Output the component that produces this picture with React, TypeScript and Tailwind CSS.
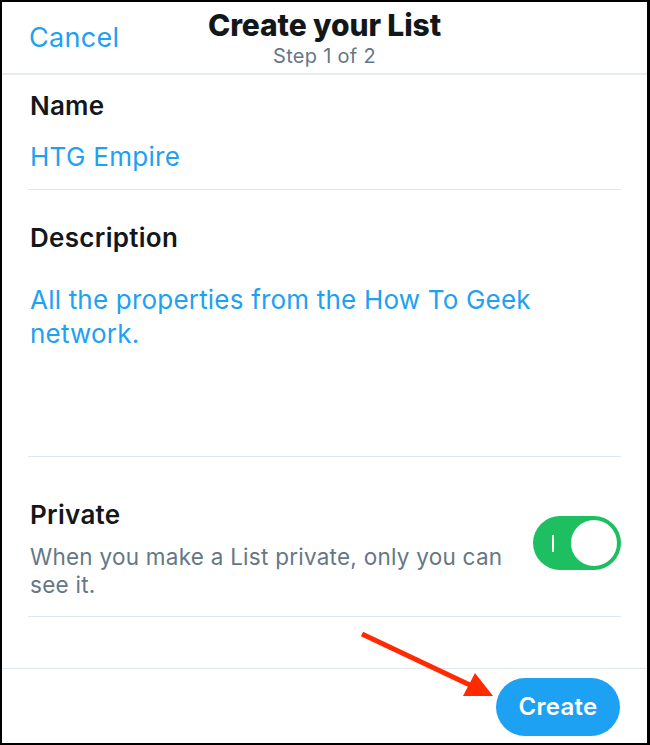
import React from "react";

function Toggle() {
  return (
    <div className="relative w-[88px] h-[54px] rounded-full bg-[#1dbf60] flex items-center shrink-0">
      <div className="w-[2px] h-[17px] bg-white ml-[19px]" />
      <div className="absolute right-[2px] top-[2px] w-[50px] h-[50px] rounded-full bg-white border-2 border-[#1dbf60]" />
    </div>
  );
}

export default function App() {
  return (
    <div
      className="relative w-[650px] h-[745px] bg-white border-l-2 border-t-2 border-r-[3px] border-b-2 border-black flex flex-col overflow-hidden"
      style={{ fontFamily: "Inter, 'Noto Sans', sans-serif" }}
    >
      {/* Header */}
      <div className="relative h-[73px] shrink-0 border-b-2 border-[#e6ecf0] flex items-start">
        <div className="absolute left-[27px] top-[20px] text-[27px] leading-[32px] text-[#1da1f2] tracking-[0.3px]">
          Cancel
        </div>
        <div className="w-full flex flex-col items-center pt-[6px]">
          <div className="text-[30px] leading-[34px] font-extrabold text-[#14171a] tracking-[-0.1px]">
            Create your List
          </div>
          <div className="text-[20px] leading-[24px] text-[#657786] mt-[2px] tracking-[0.3px]">
            Step 1 of 2
          </div>
        </div>
      </div>

      {/* Body */}
      <div className="flex flex-col px-[26px] flex-1">
        {/* Name */}
        <div className="pt-[16px] pb-[17px] border-b border-[#e1e8ed] px-[2px]">
          <div className="text-[26px] leading-[30px] font-semibold text-[#14171a] tracking-[0.2px]">Name</div>
          <div className="text-[26px] leading-[30px] text-[#1da1f2] mt-[21px] tracking-[0.3px]">HTG Empire</div>
        </div>

        {/* Description */}
        <div className="h-[267px] pt-[33px] border-b border-[#e1e8ed] px-[2px]">
          <div className="text-[26px] leading-[30px] font-semibold text-[#14171a] tracking-[0.3px]">Description</div>
          <div className="text-[26px] leading-[34px] text-[#1da1f2] mt-[30px] w-[540px] tracking-[0.2px]">
            All the properties from the How To Geek network.
          </div>
        </div>

        {/* Private */}
        <div className="h-[160px] pt-[43px] border-b border-[#e1e8ed] pl-[2px] flex items-start justify-between">
          <div className="w-[490px]">
            <div className="text-[26px] leading-[30px] font-semibold text-[#14171a] tracking-[0.3px]">Private</div>
            <div className="text-[22.5px] leading-[28px] text-[#657786] mt-[13px] tracking-[0.25px]">
              When you make a List private, only you can see it.
            </div>
          </div>
          <div className="mt-[16px]">
            <Toggle />
          </div>
        </div>
      </div>

      {/* Footer */}
      <div className="h-[75px] shrink-0 border-t border-[#e1e8ed] flex items-start justify-end pr-[27px] pt-[9px]">
        <button className="w-[124px] h-[58px] rounded-full bg-[#1da1f2] text-white text-[24px] font-semibold tracking-[0.3px]">
          Create
        </button>
      </div>

      {/* Red annotation arrow */}
      <svg
        className="absolute left-0 top-0 pointer-events-none"
        width="650"
        height="745"
        viewBox="0 0 650 745"
      >
        <line x1="360" y1="632" x2="470" y2="684" stroke="#ff2a00" strokeWidth="5" strokeLinecap="butt" />
        <polygon points="473,671 461,694 491,694" fill="#ff2a00" />
      </svg>
    </div>
  );
}
